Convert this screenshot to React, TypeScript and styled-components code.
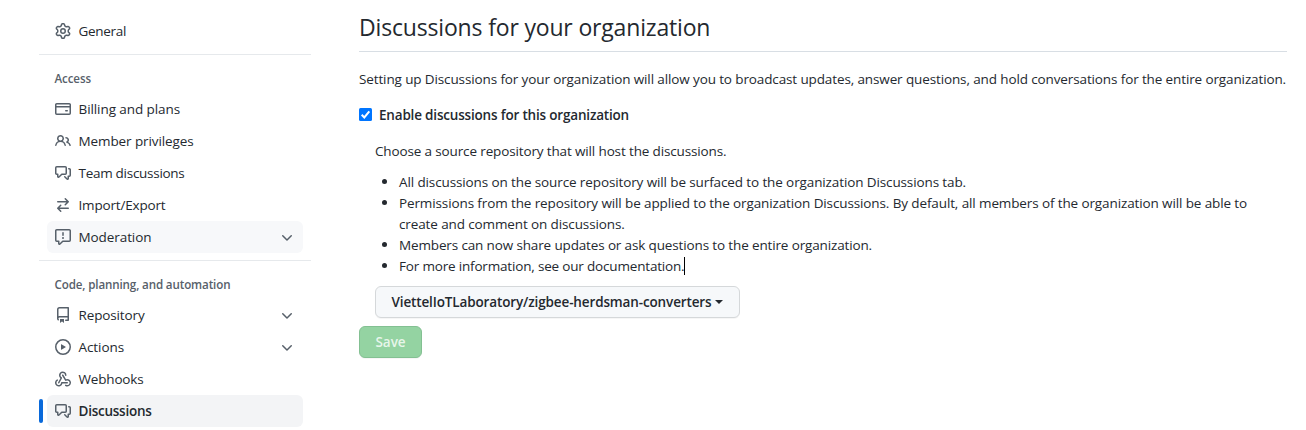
import React from "react";
import styled, { createGlobalStyle, css } from "styled-components";

const GlobalStyle = createGlobalStyle`
  *, *::before, *::after { box-sizing: border-box; }
  body {
    margin: 0;
    background: #ffffff;
    color: #24292f;
    font-family: "Open Sans", "Noto Sans", sans-serif;
    font-size: 13.5px;
    line-height: 21px;
  }
  h2, h3, p, ul { margin: 0; padding: 0; font: inherit; }
`;

const Page = styled.div`
  display: flex;
  gap: 48px;
  width: 1306px;
  height: 430px;
  padding: 0 19px 0 39px;
  overflow: hidden;
`;

const Sidebar = styled.nav`
  width: 272px;
  flex: none;
  padding-top: 15px;
`;

const NavGroup = styled.section`
  & + & {
    margin-top: 7px;
    border-top: 1px solid #e6e9ec;
    padding-top: 8px;
  }
`;

const GroupTitle = styled.h3<{ $track: number }>`
  padding: 7px 15.5px 5px;
  height: 30px;
  color: #57606a;
  font-size: 11.6px;
  font-weight: 600;
  line-height: 18px;
  letter-spacing: ${(p) => p.$track}px;
`;

const NavItem = styled.a<{ $state?: "hover" | "current" }>`
  position: relative;
  display: flex;
  align-items: center;
  gap: 7.5px;
  height: 32px;
  margin: 0 8px;
  padding: 0 8px;
  border-radius: 6px;
  color: #24292f;
  text-decoration: none;
  ${(p) => p.$state === "hover" && css`background: #f7f8fa;`}
  ${(p) =>
    p.$state === "current" &&
    css`
      background: #f3f4f6;
      font-weight: 600;
      &::before {
        content: "";
        position: absolute;
        left: -8px;
        top: 4px;
        width: 4px;
        height: 24px;
        border-radius: 2px;
        background: #0969da;
      }
    `}
`;

const NavLabel = styled.span<{ $track: number }>`
  flex: 1;
  white-space: nowrap;
  letter-spacing: ${(p) => p.$track}px;
`;

const Glyph = styled.svg`
  flex: none;
  width: 16px;
  height: 16px;
  fill: #57606a;
`;

const Main = styled.main`
  flex: 1;
  min-width: 0;
  padding-top: 9px;
`;

const Title = styled.h2`
  height: 43px;
  border-bottom: 1px solid #d8dee4;
  font-size: 23px;
  line-height: 36px;
  letter-spacing: -0.17px;
`;

const Text = styled.p<{ $track: number }>`
  white-space: nowrap;
  letter-spacing: ${(p) => p.$track}px;
`;

const Intro = styled(Text)`
  margin-top: 17px;
`;

const CheckRow = styled.label`
  display: flex;
  align-items: center;
  gap: 7px;
  margin-top: 15px;
  font-weight: 600;
  letter-spacing: -0.184px;
`;

const CheckMark = styled.svg`
  width: 13px;
  height: 13px;
  margin-bottom: 2px;
`;

const Details = styled.div`
  padding: 15px 0 0 16px;
`;

const Notes = styled.ul`
  margin: 10px 0 9px;
  padding-left: 24px;
  list-style: none;
`;

const Note = styled.li<{ $track: number }>`
  position: relative;
  letter-spacing: ${(p) => p.$track}px;
  &::before {
    content: "";
    position: absolute;
    left: -17px;
    top: 7px;
    width: 5px;
    height: 5px;
    border-radius: 50%;
    background: #24292f;
  }
`;

const TextCursor = styled.span`
  display: inline-block;
  width: 1px;
  height: 18px;
  vertical-align: -4px;
  background: #000000;
`;

const Button = styled.button`
  display: flex;
  align-items: center;
  height: 32px;
  padding: 0 15.5px;
  border: 1px solid #d5d8da;
  border-radius: 6px;
  background: #f6f8fa;
  box-shadow: 0 1px 0 rgba(27, 31, 36, 0.04);
  color: #24292f;
  font: inherit;
  font-weight: 600;
  white-space: nowrap;
`;

const RepoButton = styled(Button)`
  width: 365px;
  letter-spacing: -0.132px;
  &::after {
    content: "";
    margin-left: 3.5px;
    border: 4px solid transparent;
    border-top-color: #24292f;
    border-bottom: 0;
  }
`;

const SaveButton = styled(Button)`
  justify-content: center;
  width: 63px;
  margin-top: 8px;
  padding: 0;
  border-color: #83c092;
  background: #94d3a2;
  color: rgba(255, 255, 255, 0.8);
  letter-spacing: -0.07px;
`;

const icons = {
  gear: [
    "M7.429 1.525a6.593 6.593 0 011.142 0c.036.003.108.036.137.146l.289 1.105c.147.56.55.967.997 1.189.174.086.341.183.501.29.417.278.97.423 1.53.27l1.102-.303c.11-.03.175.016.195.046.219.31.41.641.573.989.014.031.022.11-.059.19l-.815.806c-.411.406-.562.957-.53 1.456a4.588 4.588 0 010 .582c-.032.499.119 1.05.53 1.456l.815.806c.08.08.073.159.059.19a6.494 6.494 0 01-.573.99c-.02.029-.086.074-.195.045l-1.103-.303c-.559-.153-1.112-.008-1.529.27-.16.107-.327.204-.5.29-.449.222-.851.628-.998 1.189l-.289 1.105c-.029.11-.101.143-.137.146a6.613 6.613 0 01-1.142 0c-.036-.003-.108-.037-.137-.146l-.289-1.105c-.147-.56-.55-.967-.997-1.189a4.502 4.502 0 01-.501-.29c-.417-.278-.97-.423-1.53-.27l-1.102.303c-.11.03-.175-.016-.195-.046a6.492 6.492 0 01-.573-.989c-.014-.031-.022-.11.059-.19l.815-.806c.411-.406.562-.957.53-1.456a4.587 4.587 0 010-.582c.032-.499-.119-1.05-.53-1.456l-.815-.806c-.08-.08-.073-.159-.059-.19a6.44 6.44 0 01.573-.99c.02-.029.086-.075.195-.045l1.103.303c.559.153 1.112.008 1.529-.27.16-.107.327-.204.5-.29.449-.222.851-.628.998-1.189l.289-1.105c.029-.11.101-.143.137-.146zM8 0c-.236 0-.47.01-.701.03-.743.065-1.29.615-1.458 1.261l-.29 1.106c-.017.066-.078.158-.211.224a5.994 5.994 0 00-.668.386c-.123.082-.233.09-.3.071L3.27 2.776c-.644-.177-1.392.02-1.82.63a7.977 7.977 0 00-.704 1.217c-.315.675-.111 1.422.363 1.891l.815.806c.05.048.098.147.088.294a6.084 6.084 0 000 .772c.01.147-.038.246-.088.294l-.815.806c-.474.469-.678 1.216-.363 1.891.2.428.436.835.704 1.218.428.609 1.176.806 1.82.63l1.103-.303c.066-.019.176-.011.299.071.213.143.436.272.668.386.133.066.194.158.212.224l.289 1.106c.169.646.715 1.196 1.458 1.26a8.094 8.094 0 001.402 0c.743-.064 1.29-.614 1.458-1.26l.29-1.106c.017-.066.078-.158.211-.224a5.98 5.98 0 00.668-.386c.123-.082.233-.09.3-.071l1.102.302c.644.177 1.392-.02 1.82-.63.268-.382.505-.789.704-1.217.315-.675.111-1.422-.364-1.891l-.814-.806c-.05-.048-.098-.147-.088-.294a6.1 6.1 0 000-.772c-.01-.147.039-.246.088-.294l.814-.806c.475-.469.679-1.216.364-1.891a7.992 7.992 0 00-.704-1.218c-.428-.609-1.176-.806-1.82-.63l-1.103.303c-.066.019-.176.011-.299-.071a5.991 5.991 0 00-.668-.386c-.133-.066-.194-.158-.212-.224L10.16 1.29C9.99.645 9.444.095 8.701.031A8.094 8.094 0 008 0zm1.5 8a1.5 1.5 0 11-3 0 1.5 1.5 0 013 0zM11 8a3 3 0 11-6 0 3 3 0 016 0z",
  ],
  card: [
    "M10.75 9a.75.75 0 000 1.5h1.5a.75.75 0 000-1.5h-1.5z",
    "M0 3.75C0 2.784.784 2 1.75 2h12.5c.966 0 1.75.784 1.75 1.75v8.5A1.75 1.75 0 0114.25 14H1.75A1.75 1.75 0 010 12.25v-8.5zm14.5 0V5h-13V3.75a.25.25 0 01.25-.25h12.5a.25.25 0 01.25.25zm0 2.75h-13v5.75c0 .138.112.25.25.25h12.5a.25.25 0 00.25-.25V6.5z",
  ],
  people: [
    "M5.5 3.5a2 2 0 100 4 2 2 0 000-4zM2 5.5a3.5 3.5 0 115.898 2.549 5.507 5.507 0 013.034 4.084.75.75 0 11-1.482.235 4.001 4.001 0 00-7.9 0 .75.75 0 01-1.482-.236A5.507 5.507 0 013.102 8.05 3.49 3.49 0 012 5.5zM11 4a.75.75 0 100 1.5 1.5 1.5 0 01.666 2.844.75.75 0 00-.416.672v.352a.75.75 0 00.574.73c1.2.289 2.162 1.2 2.522 2.372a.75.75 0 101.434-.44 5.01 5.01 0 00-2.56-3.012A3 3 0 0011 4z",
  ],
  discussion: [
    "M1.5 2.75a.25.25 0 01.25-.25h8.5a.25.25 0 01.25.25v5.5a.25.25 0 01-.25.25h-3.5a.75.75 0 00-.53.22L3.5 11.44V9.25a.75.75 0 00-.75-.75h-1a.25.25 0 01-.25-.25v-5.5zM1.75 1A1.75 1.75 0 000 2.75v5.5C0 9.216.784 10 1.75 10H2v1.543a1.457 1.457 0 002.487 1.03L7.061 10h3.189A1.75 1.75 0 0012 8.25v-5.5A1.75 1.75 0 0010.25 1h-8.5zM14.5 4.75a.25.25 0 00-.25-.25h-.5a.75.75 0 110-1.5h.5c.966 0 1.75.784 1.75 1.75v5.5A1.75 1.75 0 0114.25 12H14v1.543a1.457 1.457 0 01-2.487 1.03L9.22 12.28a.75.75 0 111.06-1.06l2.22 2.22v-2.19a.75.75 0 01.75-.75h1a.25.25 0 00.25-.25v-5.5z",
  ],
  arrows: [
    "M5.22 14.78a.75.75 0 001.06-1.06L4.56 12h8.69a.75.75 0 000-1.5H4.56l1.72-1.72a.75.75 0 00-1.06-1.06l-3 3a.75.75 0 000 1.06l3 3zm5.56-6.5a.75.75 0 11-1.06-1.06l1.72-1.72H2.75a.75.75 0 010-1.5h8.69L9.72 2.28a.75.75 0 011.06-1.06l3 3a.75.75 0 010 1.06l-3 3z",
  ],
  report: [
    "M1.75 1.5a.25.25 0 00-.25.25v9.5c0 .138.112.25.25.25h2a.75.75 0 01.75.75v2.19l2.72-2.72a.75.75 0 01.53-.22h6.5a.25.25 0 00.25-.25v-9.5a.25.25 0 00-.25-.25H1.75zM0 1.75C0 .784.784 0 1.75 0h12.5C15.216 0 16 .784 16 1.75v9.5A1.75 1.75 0 0114.25 13H8.06l-2.573 2.573A1.457 1.457 0 013 14.543V13H1.75A1.75 1.75 0 010 11.25v-9.5zM9 9a1 1 0 11-2 0 1 1 0 012 0zm-.25-5.25a.75.75 0 00-1.5 0v2.5a.75.75 0 001.5 0v-2.5z",
  ],
  repo: [
    "M2 2.5A2.5 2.5 0 014.5 0h8.75a.75.75 0 01.75.75v12.5a.75.75 0 01-.75.75h-2.5a.75.75 0 110-1.5h1.75v-2h-8a1 1 0 00-.714 1.7.75.75 0 01-1.072 1.05A2.495 2.495 0 012 11.5v-9zm10.5-1V9h-8c-.356 0-.694.074-1 .208V2.5a1 1 0 011-1h8zM5 12.25v3.25a.25.25 0 00.4.2l1.45-1.087a.25.25 0 01.3 0L8.6 15.7a.25.25 0 00.4-.2v-3.25a.25.25 0 00-.25-.25h-3.5a.25.25 0 00-.25.25z",
  ],
  play: [
    "M1.5 8a6.5 6.5 0 1113 0 6.5 6.5 0 01-13 0zM8 0a8 8 0 100 16A8 8 0 008 0zM6.379 5.227A.25.25 0 006 5.442v5.117a.25.25 0 00.379.214l4.264-2.559a.25.25 0 000-.428L6.379 5.227z",
  ],
  webhook: [
    "M5.5 4.25a2.25 2.25 0 014.5 0 .75.75 0 001.5 0 3.75 3.75 0 10-6.14 2.889l-2.272 4.258a.75.75 0 001.324.706L7 7.25a.75.75 0 00-.309-1.015A2.25 2.25 0 015.5 4.25z",
    "M7.364 3.607a.75.75 0 011.03.257l2.608 4.349a3.75 3.75 0 11-.628 6.785.75.75 0 01.752-1.299 2.25 2.25 0 10-.033-3.88.75.75 0 01-1.03-.256L7.107 4.636a.75.75 0 01.257-1.03z",
    "M2.9 8.776A.75.75 0 012.625 9.8 2.25 2.25 0 106 11.75a.75.75 0 01.75-.751h5.5a.75.75 0 010 1.5H7.425a3.751 3.751 0 11-5.55-3.998.75.75 0 011.024.274z",
  ],
  chevron: [
    "M12.78 6.22a.75.75 0 010 1.06l-4.25 4.25a.75.75 0 01-1.06 0L3.22 7.28a.75.75 0 011.06-1.06L8 9.94l3.72-3.72a.75.75 0 011.06 0z",
  ],
};

type IconName = keyof typeof icons;

function Icon({ name }: { name: IconName }) {
  return (
    <Glyph viewBox="0 0 16 16" aria-hidden="true">
      {icons[name].map((d) => (
        <path key={d} d={d} fillRule="evenodd" />
      ))}
    </Glyph>
  );
}

interface Item {
  label: string;
  icon: IconName;
  track: number;
  expandable?: boolean;
  state?: "hover" | "current";
}

interface Group {
  title?: string;
  track?: number;
  items: Item[];
}

const groups: Group[] = [
  { items: [{ label: "General", icon: "gear", track: -0.31 }] },
  {
    title: "Access",
    track: -0.12,
    items: [
      { label: "Billing and plans", icon: "card", track: -0.08 },
      { label: "Member privileges", icon: "people", track: -0.1 },
      { label: "Team discussions", icon: "discussion", track: -0.28 },
      { label: "Import/Export", icon: "arrows", track: -0.17 },
      { label: "Moderation", icon: "report", track: -0.08, expandable: true, state: "hover" },
    ],
  },
  {
    title: "Code, planning, and automation",
    track: -0.127,
    items: [
      { label: "Repository", icon: "repo", track: -0.13, expandable: true },
      { label: "Actions", icon: "play", track: -0.08, expandable: true },
      { label: "Webhooks", icon: "webhook", track: -0.17 },
      { label: "Discussions", icon: "discussion", track: -0.25, state: "current" },
    ],
  },
];

export default function App() {
  return (
    <>
      <GlobalStyle />
      <Page>
        <Sidebar>
          {groups.map((group, i) => (
            <NavGroup key={i}>
              {group.title && <GroupTitle $track={group.track ?? 0}>{group.title}</GroupTitle>}
              {group.items.map((item) => (
                <NavItem key={item.label} $state={item.state}>
                  <Icon name={item.icon} />
                  <NavLabel $track={item.track}>{item.label}</NavLabel>
                  {item.expandable && <Icon name="chevron" />}
                </NavItem>
              ))}
            </NavGroup>
          ))}
        </Sidebar>
        <Main>
          <Title>Discussions for your organization</Title>
          <Intro $track={-0.121}>
            Setting up Discussions for your organization will allow you to broadcast updates, answer
            questions, and hold conversations for the entire organization.
          </Intro>
          <CheckRow>
            <CheckMark viewBox="0 0 13 13" aria-hidden="true">
              <rect width="13" height="13" rx="1.5" fill="#0075ff" />
              <path d="M2.7 6.8l2.6 2.6 5-6.1" fill="none" stroke="#fff" strokeWidth="2" />
            </CheckMark>
            Enable discussions for this organization
          </CheckRow>
          <Details>
            <Text $track={-0.138}>Choose a source repository that will host the discussions.</Text>
            <Notes>
              <Note $track={-0.115}>
                All discussions on the source repository will be surfaced to the organization
                Discussions tab.
              </Note>
              <Note $track={-0.117}>
                Permissions from the repository will be applied to the organization Discussions. By
                default, all members of the organization will be able to
                <br />
                create and comment on discussions.
              </Note>
              <Note $track={-0.14}>
                Members can now share updates or ask questions to the entire organization.
              </Note>
              <Note $track={-0.178}>
                For more information, see our documentation.
                <TextCursor />
              </Note>
            </Notes>
            <RepoButton type="button">ViettelIoTLaboratory/zigbee-herdsman-converters</RepoButton>
          </Details>
          <SaveButton type="button">Save</SaveButton>
        </Main>
      </Page>
    </>
  );
}
